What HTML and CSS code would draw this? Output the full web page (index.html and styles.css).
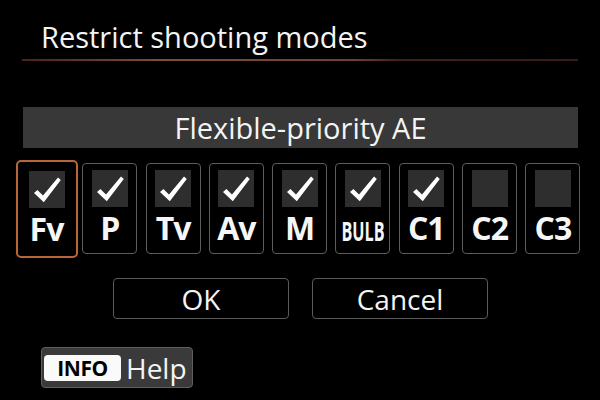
FILE: index.html
```html
<!DOCTYPE html>
<html>
<head>
<meta charset="utf-8">
<link rel="stylesheet" href="styles.css">
</head>
<body>
<div class="screen">
  <div class="title">Restrict shooting modes</div>
  <div class="rule"></div>
  <div class="mode-name">Flexible-priority AE</div>
  <div class="modes">
    <div class="mode selected">
      <div class="box"><svg class="check" viewBox="0 0 36 37"><path d="M5 22 L8.4 19 L14 24.6 L29 6.6 L31.8 9 L14.8 31.2 Z"/></svg></div>
      <div class="label">Fv</div>
    </div>
    <div class="mode">
      <div class="box"><svg class="check" viewBox="0 0 36 37"><path d="M5 22 L8.4 19 L14 24.6 L29 6.6 L31.8 9 L14.8 31.2 Z"/></svg></div>
      <div class="label">P</div>
    </div>
    <div class="mode">
      <div class="box"><svg class="check" viewBox="0 0 36 37"><path d="M5 22 L8.4 19 L14 24.6 L29 6.6 L31.8 9 L14.8 31.2 Z"/></svg></div>
      <div class="label">Tv</div>
    </div>
    <div class="mode">
      <div class="box"><svg class="check" viewBox="0 0 36 37"><path d="M5 22 L8.4 19 L14 24.6 L29 6.6 L31.8 9 L14.8 31.2 Z"/></svg></div>
      <div class="label">Av</div>
    </div>
    <div class="mode">
      <div class="box"><svg class="check" viewBox="0 0 36 37"><path d="M5 22 L8.4 19 L14 24.6 L29 6.6 L31.8 9 L14.8 31.2 Z"/></svg></div>
      <div class="label">M</div>
    </div>
    <div class="mode">
      <div class="box"><svg class="check" viewBox="0 0 36 37"><path d="M5 22 L8.4 19 L14 24.6 L29 6.6 L31.8 9 L14.8 31.2 Z"/></svg></div>
      <div class="label"><span class="bulb">BULB</span></div>
    </div>
    <div class="mode">
      <div class="box"><svg class="check" viewBox="0 0 36 37"><path d="M5 22 L8.4 19 L14 24.6 L29 6.6 L31.8 9 L14.8 31.2 Z"/></svg></div>
      <div class="label">C1</div>
    </div>
    <div class="mode">
      <div class="box"></div>
      <div class="label">C2</div>
    </div>
    <div class="mode">
      <div class="box"></div>
      <div class="label">C3</div>
    </div>
  </div>
  <div class="buttons">
    <div class="btn">OK</div>
    <div class="btn">Cancel</div>
  </div>
  <div class="help">
    <span class="info">INFO</span>
    <span class="help-text">Help</span>
  </div>
</div>
</body>
</html>
```
FILE: styles.css
```css
html, body {
  margin: 0;
  padding: 0;
  background: #000;
}
.screen {
  width: 600px;
  height: 400px;
  background: #000;
  color: #f4f4f4;
  font-family: "Open Sans", "Noto Sans", sans-serif;
  display: flex;
  flex-direction: column;
  overflow: hidden;
}
.title {
  margin: 22px 0 0 41px;
  font-size: 29px;
  line-height: 29px;
  height: 29px;
  white-space: nowrap;
}
.rule {
  margin: 8px 22px 0 22px;
  height: 2px;
  background: linear-gradient(90deg, #4a2416 0%, #7e4e36 25%, #704030 60%, #421f13 68%, #3c1b10 100%);
}
.mode-name {
  margin: 46px 22px 0 23px;
  height: 41px;
  background: #383838;
  display: flex;
  align-items: center;
  justify-content: center;
  font-size: 29px;
  line-height: 41px;
}
.modes {
  margin-top: 15px;
  padding-left: 19px;
  display: flex;
  gap: 8.3px;
}
.mode {
  box-sizing: border-box;
  width: 55px;
  height: 91px;
  border: 1.5px solid #5c5c5c;
  border-radius: 4px;
  display: flex;
  flex-direction: column;
  align-items: center;
  padding-top: 6px;
}
.mode.selected {
  width: 62px;
  height: 98px;
  margin: -3.5px;
  padding-top: 9px;
  border: 2px solid #b8653a;
  border-radius: 5px;
}
.box {
  width: 36px;
  height: 37px;
  background: #2e2e2e;
  flex: none;
}
.check {
  display: block;
  width: 36px;
  height: 37px;
  fill: #ffffff;
}
.label {
  margin-top: 5px;
  font-size: 32px;
  line-height: 32px;
  font-weight: 700;
  letter-spacing: -1px;
  white-space: nowrap;
  color: #f6f6f6;
}
.bulb {
  display: inline-block;
  font-size: 27px;
  letter-spacing: 0;
  transform: scaleX(0.6);
  transform-origin: center;
  margin: 0 -16px;
  position: relative;
  top: 1px;
}
.buttons {
  margin-top: 24px;
  display: flex;
  justify-content: center;
  gap: 23px;
  padding-left: 1px;
}
.btn {
  box-sizing: border-box;
  width: 176px;
  height: 41px;
  border: 1.5px solid #5a5a5a;
  border-radius: 4px;
  display: flex;
  align-items: center;
  justify-content: center;
  font-size: 28px;
  line-height: 28px;
}
.help {
  margin: 28px 0 0 41px;
  box-sizing: border-box;
  width: 152px;
  height: 41px;
  background: #3a3a3a;
  border: 1.5px solid #5e5e5e;
  border-radius: 4px;
  display: flex;
  align-items: center;
  padding-left: 2px;
}
.info {
  box-sizing: border-box;
  width: 77px;
  height: 26px;
  background: #fafafa;
  color: #000;
  border-radius: 4px;
  display: flex;
  align-items: center;
  justify-content: center;
  font-size: 21px;
  font-weight: 700;
  letter-spacing: -0.5px;
}
.help-text {
  margin-left: 5px;
  font-size: 28px;
  line-height: 28px;
  color: #f4f4f4;
}
```
